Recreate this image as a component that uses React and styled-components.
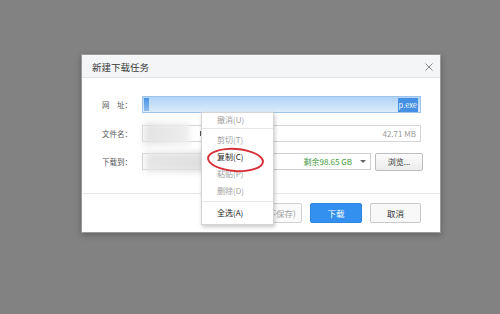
import React from "react";
import styled, { createGlobalStyle } from "styled-components";

const GlobalStyle = createGlobalStyle`
  html, body {
    margin: 0;
    padding: 0;
  }
  body {
    background: #828282;
    font-family: "Noto Sans CJK SC", "Noto Sans", sans-serif;
  }
  * {
    box-sizing: border-box;
  }
`;

const Page = styled.div`
  width: 500px;
  height: 314px;
  background: #828282;
  padding: 54px 0 0 81px;
  overflow: hidden;
`;

const Dialog = styled.div`
  position: relative;
  width: 360px;
  height: 179px;
  background: #fff;
  border: 1px solid #9a9a9a;
  box-shadow: 0 2px 6px rgba(0, 0, 0, 0.25);
  display: flex;
  flex-direction: column;
`;

const TitleBar = styled.div`
  flex: none;
  height: 23px;
  display: flex;
  align-items: center;
  justify-content: space-between;
  padding: 1px 7px 0 10px;
  background: #f3f5f6;
  border-bottom: 1px solid #e1e3e4;
`;

const Title = styled.span`
  font-size: 9.5px;
  color: #3a3a3a;
`;

const Close = styled.svg`
  width: 8px;
  height: 8px;
  display: block;
`;

const Body = styled.div`
  flex: none;
  height: 116px;
  padding: 18px 19px 0 20px;
  border-bottom: 1px solid #e6e6e6;
  display: flex;
  flex-direction: column;
`;

const Row = styled.div`
  display: flex;
  align-items: center;
  height: 17px;
  margin-top: ${({ gap }) => gap || 0}px;
`;

const Label = styled.span`
  flex: none;
  width: 40px;
  font-size: 7.5px;
  color: #555;
  white-space: nowrap;
`;

const UrlInput = styled.div`
  flex: 1;
  height: 17px;
  display: flex;
  align-items: center;
  justify-content: space-between;
  padding: 0 2px 0 1px;
  border: 1px solid #9fc4ea;
  background: linear-gradient(#b1d3f6, #dcecfb);
`;

const Caret = styled.span`
  width: 5px;
  height: 13px;
  background: linear-gradient(#4a94e4, #8dbdf0);
`;

const Selected = styled.span`
  height: 14px;
  line-height: 14px;
  padding: 0 1px;
  font-size: 7.5px;
  color: #f2f7fd;
  background: #4590e2;
`;

const Field = styled.div`
  flex: ${({ width }) => (width ? "none" : 1)};
  width: ${({ width }) => (width ? `${width}px` : "auto")};
  height: 17px;
  display: flex;
  align-items: center;
  padding: 0 4px 0 0;
  border: 1px solid ${({ border }) => border || "#d6d6d6"};
`;

const Blur = styled.span`
  flex: none;
  width: ${({ w }) => w}px;
  height: ${({ h }) => h}px;
  margin-left: ${({ offset }) => offset || 0}px;
  background: ${({ tone }) => tone};
  filter: blur(3px);
`;

const Mark = styled.span`
  width: 1px;
  height: 5px;
  margin-left: 10px;
  background: #555;
`;

const Spacer = styled.span`
  flex: 1;
`;

const FieldText = styled.span`
  font-size: 8px;
  color: ${({ color }) => color};
  white-space: nowrap;
`;

const Arrow = styled.span`
  width: 0;
  height: 0;
  margin-left: 8px;
  border-left: 3px solid transparent;
  border-right: 3px solid transparent;
  border-top: 3px solid #666;
`;

const SmallButton = styled.div`
  flex: none;
  width: 48px;
  height: 18px;
  margin-left: 4px;
  display: flex;
  align-items: center;
  justify-content: center;
  font-size: 8px;
  color: #333;
  border: 1px solid #bdbdbd;
  border-radius: 2px;
  background: linear-gradient(#fbfbfb, #ececec);
`;

const Footer = styled.div`
  flex: 1;
  display: flex;
  justify-content: flex-end;
  align-items: flex-start;
  gap: 8px;
  padding: 9px 19px 0 0;
`;

const variants = {
  ghost: { bg: "#fafafa", border: "#d2d2d2", color: "#a3a3a3" },
  primary: { bg: "#3490ee", border: "#2d85df", color: "#fff" },
  plain: { bg: "#f8f8f8", border: "#c8c8c8", color: "#333" },
};

const Button = styled.div`
  width: ${({ width }) => width}px;
  height: 20px;
  display: flex;
  align-items: center;
  justify-content: ${({ variant }) => (variant === "ghost" ? "flex-end" : "center")};
  padding-right: ${({ variant }) => (variant === "ghost" ? 5 : 0)}px;
  font-size: 8.5px;
  white-space: nowrap;
  border-radius: 2px;
  background: ${({ variant }) => variants[variant].bg};
  border: 1px solid ${({ variant }) => variants[variant].border};
  color: ${({ variant }) => variants[variant].color};
`;

const Menu = styled.div`
  position: absolute;
  left: 119px;
  top: 57px;
  width: 73px;
  padding: 0 0 3px;
  background: #fff;
  border: 1px solid #d4d4d4;
  box-shadow: 1px 2px 4px rgba(0, 0, 0, 0.22);
`;

const MenuItem = styled.div`
  height: ${({ short }) => (short ? 13 : 17)}px;
  display: flex;
  align-items: center;
  padding-left: 15px;
  font-size: 8px;
  color: ${({ disabled }) => (disabled ? "#a0a0a0" : "#222")};
`;

const MenuSep = styled.div`
  height: 1px;
  margin: 2px 0;
  background: #e6e6e6;
`;

const Circle = styled.div`
  position: absolute;
  left: 125px;
  top: 93px;
  width: 57px;
  height: 24px;
  border: 2px solid #d6303a;
  border-radius: 50%;
  transform: rotate(4deg);
`;

const menuItems = [
  { label: "撤消(U)", disabled: true, short: true },
  "sep",
  { label: "剪切(T)", disabled: true },
  { label: "复制(C)" },
  { label: "粘贴(P)", disabled: true },
  { label: "删除(D)", disabled: true },
  "sep",
  { label: "全选(A)" },
];

export default function App() {
  return (
    <Page>
      <GlobalStyle />
      <Dialog>
        <TitleBar>
          <Title>新建下载任务</Title>
          <Close viewBox="0 0 8 8">
            <path d="M0.5 0.5L7.5 7.5M7.5 0.5L0.5 7.5" stroke="#8a8a8a" strokeWidth="1" />
          </Close>
        </TitleBar>
        <Body>
          <Row>
            <Label>网&emsp;址：</Label>
            <UrlInput>
              <Caret />
              <Selected>p.exe</Selected>
            </UrlInput>
          </Row>
          <Row gap={12}>
            <Label>文件名：</Label>
            <Field>
              <Blur w={46} h={22} offset={1} tone="linear-gradient(90deg, #e2e2e2, #eeeeee)" />
              <Mark />
              <Spacer />
              <FieldText color="#9a9a9a">42.71 MB</FieldText>
            </Field>
          </Row>
          <Row gap={11}>
            <Label>下载到：</Label>
            <Field width={229} border="#cfcfcf">
              <Blur w={90} h={20} offset={2} tone="linear-gradient(90deg, #e6e6e6, #dcdcdc)" />
              <Spacer />
              <FieldText color="#3f9a3c">剩余98.65 GB</FieldText>
              <Arrow />
            </Field>
            <SmallButton>浏览...</SmallButton>
          </Row>
        </Body>
        <Footer>
          <Button variant="ghost" width={72}>打开(不保存)</Button>
          <Button variant="primary" width={52}>下载</Button>
          <Button variant="plain" width={51}>取消</Button>
        </Footer>
        <Menu>
          {menuItems.map((item, i) =>
            item === "sep" ? (
              <MenuSep key={i} />
            ) : (
              <MenuItem key={i} disabled={item.disabled} short={item.short}>
                {item.label}
              </MenuItem>
            )
          )}
        </Menu>
        <Circle />
      </Dialog>
    </Page>
  );
}
